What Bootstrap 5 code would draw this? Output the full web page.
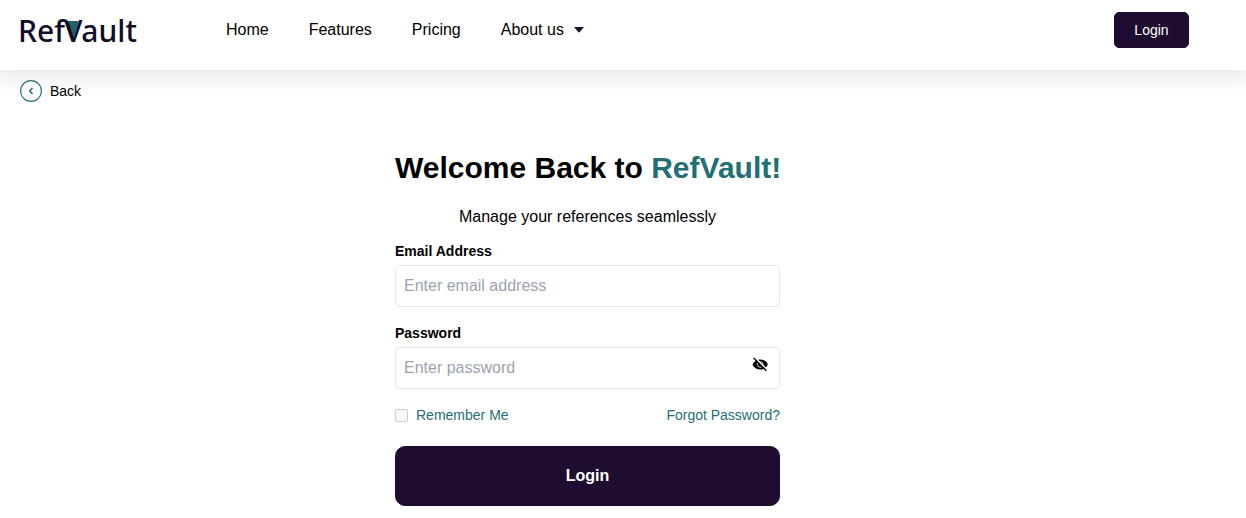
<!DOCTYPE html>
<html lang="en">
<head>
<meta charset="utf-8">
<meta name="viewport" content="width=device-width, initial-scale=1">
<title>RefVault – Login</title>
<link href="https://cdn.jsdelivr.net/npm/bootstrap@5.3.0/dist/css/bootstrap.min.css" rel="stylesheet">
<style>
  :root { --ink: #1e0d30; --teal: #236f76; }
  body { font-family: "Liberation Sans", Arial, sans-serif; font-size: 16px; line-height: 24px; color: #000; }
  a { text-decoration: none; }
  .site-header { height: 70px; padding: 12px 57px 0 18px; background: #fff; box-shadow: 0 2px 20px 8px rgba(0, 0, 0, .08); }
  .brand { font: 500 30px/38px "Noto Sans", sans-serif; color: #120d27; width: 208px; }
  .brand-v { position: relative; display: inline-block; margin: 0 -1px; }
  .brand-v svg { position: absolute; left: 1px; top: 9px; }
  .site-nav { gap: 40px; padding-top: 6px; }
  .site-nav a { color: #000; }
  .btn-ink { --bs-btn-color: #fff; --bs-btn-bg: var(--ink); --bs-btn-border-color: var(--ink);
    --bs-btn-hover-color: #fff; --bs-btn-hover-bg: #33194e; --bs-btn-hover-border-color: #33194e; }
  .btn-top { width: 75px; height: 36px; padding: 0; font-size: 14px; border-radius: 5px; }
  .back-row { padding: 10px 20px 0; }
  .back-link { color: #000; font-size: 14px; line-height: 22px; }
  .login-area { padding: 39px 71px 12px 0; }
  .login-form { width: 385px; }
  .title { font-size: 30px; line-height: 40px; font-weight: 700; margin: 0 0 17px; }
  .teal { color: var(--teal); }
  .field-label { font-size: 14px; line-height: 20px; font-weight: 700; margin-bottom: 4px; }
  .field { height: 42px; padding: 8px; border: 1px solid #e5e7eb; border-radius: 4px; color: #000; }
  .field::placeholder { color: #9ca3af; }
  .eye { position: absolute; right: 11px; top: 9px; }
  .options { font-size: 14px; line-height: 20px; margin: 16px 0 21px; }
  .options .form-check-input { width: 13px; height: 13px; border-radius: 2px; border: 1px solid #ccc; background-color: #f8f8f8; }
  .options .form-check-input:checked { background-color: var(--teal); }
  .btn-submit { height: 60px; border-radius: 10px; font-weight: 700; }
</style>
</head>
<body>
<header class="site-header d-flex align-items-start position-relative">
  <a class="brand" href="#">Ref<span class="brand-v">V<svg width="17" height="21" viewBox="0 0 17 21" aria-hidden="true"><path d="M3 0H14L9 17H7Z" fill="#235f66"/><path d="M0 .5H3.500L9 17.500 7.500 20H7Z" fill="#120d27"/></svg></span>ault</a>
  <nav class="site-nav d-flex flex-grow-1">
    <a href="#">Home</a>
    <a href="#">Features</a>
    <a href="#">Pricing</a>
    <a href="#" class="d-flex align-items-center">About us
      <svg class="ms-2" width="14" height="8" viewBox="0 0 14 8" aria-hidden="true"><path d="M2 1H12L7.500 6.200Q7 6.800 6.500 6.200Z" fill="#1e0d30"/></svg>
    </a>
  </nav>
  <button type="button" class="btn btn-ink btn-top">Login</button>
</header>
<div class="back-row position-relative">
  <a class="back-link d-inline-flex align-items-center gap-2" href="#">
    <svg width="22" height="22" viewBox="0 0 22 22" fill="none" stroke="#236f76" aria-hidden="true"><circle cx="11" cy="11" r="10.400" stroke-width="1.100"/><path d="M12.500 8 9.700 11l2.800 3" stroke-width="1.500"/></svg>
    Back
  </a>
</div>
<main class="login-area d-flex justify-content-center">
  <form class="login-form">
    <h1 class="title text-nowrap">Welcome Back to <span class="teal">RefVault!</span></h1>
    <p class="text-center mb-2 pb-1">Manage your references seamlessly</p>
    <label class="field-label d-block" for="email">Email Address</label>
    <input class="form-control field" type="email" id="email" placeholder="Enter email address">
    <label class="field-label d-block mt-3" for="password">Password</label>
    <div class="position-relative">
      <input class="form-control field" type="password" id="password" placeholder="Enter password">
      <button type="button" class="eye btn p-0 border-0 d-flex" aria-label="Show password">
        <svg width="17" height="17" viewBox="0 0 17 17"><path d="M.5 8.500C1.700 5.300 4.900 3.400 8.200 3.400s6.500 1.900 7.700 5.100c-1.200 3.200-4.400 5.100-7.700 5.100S1.700 11.700.5 8.500Z"/><circle cx="8.200" cy="8.500" r="2.800" fill="none" stroke="#fff" stroke-width=".8"/><path d="M3.100 1.700 15.600 14.200" stroke="#fff" stroke-width="1.500"/><path d="M1.700 2 14.400 14.700" stroke="#000" stroke-width="1.300"/></svg>
      </button>
    </div>
    <div class="options d-flex justify-content-between">
      <div class="d-flex align-items-center gap-2">
        <input class="form-check-input m-0" type="checkbox" id="remember">
        <label class="teal" for="remember">Remember Me</label>
      </div>
      <a class="teal" href="#">Forgot Password?</a>
    </div>
    <button type="submit" class="btn btn-ink btn-submit w-100">Login</button>
  </form>
</main>
<script src="https://cdn.jsdelivr.net/npm/bootstrap@5.3.0/dist/js/bootstrap.bundle.min.js"></script>
</body>
</html>
